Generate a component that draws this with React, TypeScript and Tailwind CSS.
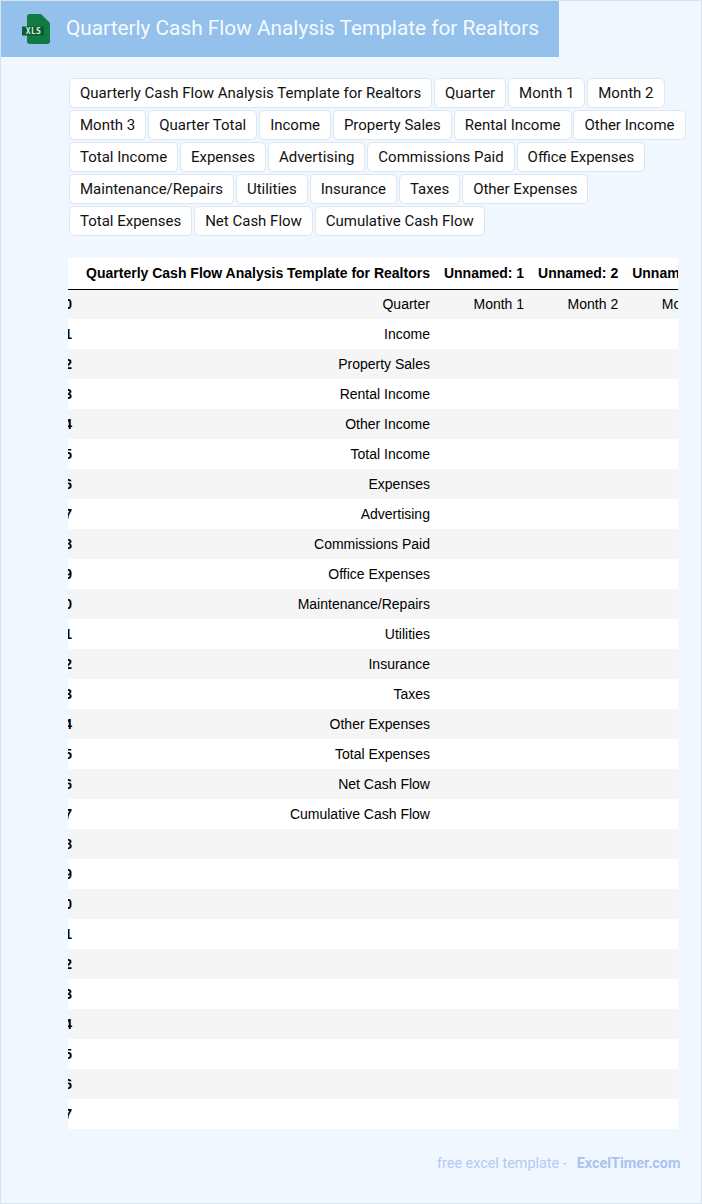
const tags = [
  "Quarterly Cash Flow Analysis Template for Realtors",
  "Quarter",
  "Month 1",
  "Month 2",
  "Month 3",
  "Quarter Total",
  "Income",
  "Property Sales",
  "Rental Income",
  "Other Income",
  "Total Income",
  "Expenses",
  "Advertising",
  "Commissions Paid",
  "Office Expenses",
  "Maintenance/Repairs",
  "Utilities",
  "Insurance",
  "Taxes",
  "Other Expenses",
  "Total Expenses",
  "Net Cash Flow",
  "Cumulative Cash Flow",
];

const labels = tags.slice(6);
const rows = Array.from({ length: 28 }, (_, i) => {
  if (i === 0) return "Quarter";
  return labels[i - 1] ?? "";
});

function XlsIcon() {
  return (
    <svg width="28" height="30" viewBox="0 0 28 30" className="shrink-0">
      <path d="M5 2.500C5 1 6 0 7.500 0H19l9 9v18.500c0 1.500-1 2.500-2.500 2.500H7.500C6 30 5 29 5 27.500Z" fill="#107c41" />
      <rect x="0" y="12.500" width="22" height="9" fill="#0b5c30" />
      <text
        x="11.500"
        y="20"
        textAnchor="middle"
        fontSize="8"
        fontWeight="700"
        letterSpacing="0.4"
        fontFamily="'DejaVu Sans Mono', monospace"
        fill="#d5efe0"
      >
        XLS
      </text>
    </svg>
  );
}

export default function App() {
  return (
    <div className="h-[1204px] border border-[#d6e2ee] bg-[#f0f7ff] font-['Roboto',sans-serif]">
      <header className="flex h-[56px] w-[558px] items-center bg-[#93c1ec] pl-[21px]">
        <XlsIcon />
        <h1 className="ml-[16px] text-[20.8px] whitespace-nowrap text-[#f5faff]">
          Quarterly Cash Flow Analysis Template for Realtors
        </h1>
      </header>

      <div className="mt-[21px] ml-[68px] flex w-[620px] flex-wrap gap-x-[1.9px] gap-y-0.5">
        {tags.map((tag) => (
          <span
            key={tag}
            className="h-[30px] rounded-[5px] border border-[#dce7f4] bg-white px-2.5 text-[15px] leading-[28px] whitespace-nowrap text-[#111]"
          >
            {tag}
          </span>
        ))}
      </div>

      <div className="mt-[22px] ml-[67px] w-[610px] overflow-hidden bg-white">
        <table className="-ml-[18.5px] border-collapse text-right font-['Liberation_Sans',sans-serif] text-sm whitespace-nowrap text-black">
          <thead>
            <tr className="h-[31px] border-b border-black">
              <th className="w-[30px] px-[7px]"></th>
              <th className="w-[358px] px-[7px]">Quarterly Cash Flow Analysis Template for Realtors</th>
              <th className="w-[94px] px-[7px]">Unnamed: 1</th>
              <th className="w-[94px] px-[7px]">Unnamed: 2</th>
              <th className="w-[94px] px-[7px]">Unnamed: 3</th>
            </tr>
          </thead>
          <tbody>
            {rows.map((label, i) => (
              <tr key={i} className={i % 2 === 0 ? "h-[30px] bg-[#f5f5f5]" : "h-[30px] bg-white"}>
                <th className="px-[7px]">{i}</th>
                <td className="px-[7px]">{label}</td>
                <td className="px-[7px]">{i === 0 ? "Month 1" : ""}</td>
                <td className="px-[7px]">{i === 0 ? "Month 2" : ""}</td>
                <td className="px-[7px]">{i === 0 ? "Month 3" : ""}</td>
              </tr>
            ))}
          </tbody>
        </table>
      </div>

      <footer className="mt-[24px] ml-[436px] flex gap-[10px] text-[14.4px] whitespace-nowrap">
        <span className="text-[#b5c9f2]">free excel template -</span>
        <span className="font-bold text-[#aac2f0]">ExcelTimer.com</span>
      </footer>
    </div>
  );
}
